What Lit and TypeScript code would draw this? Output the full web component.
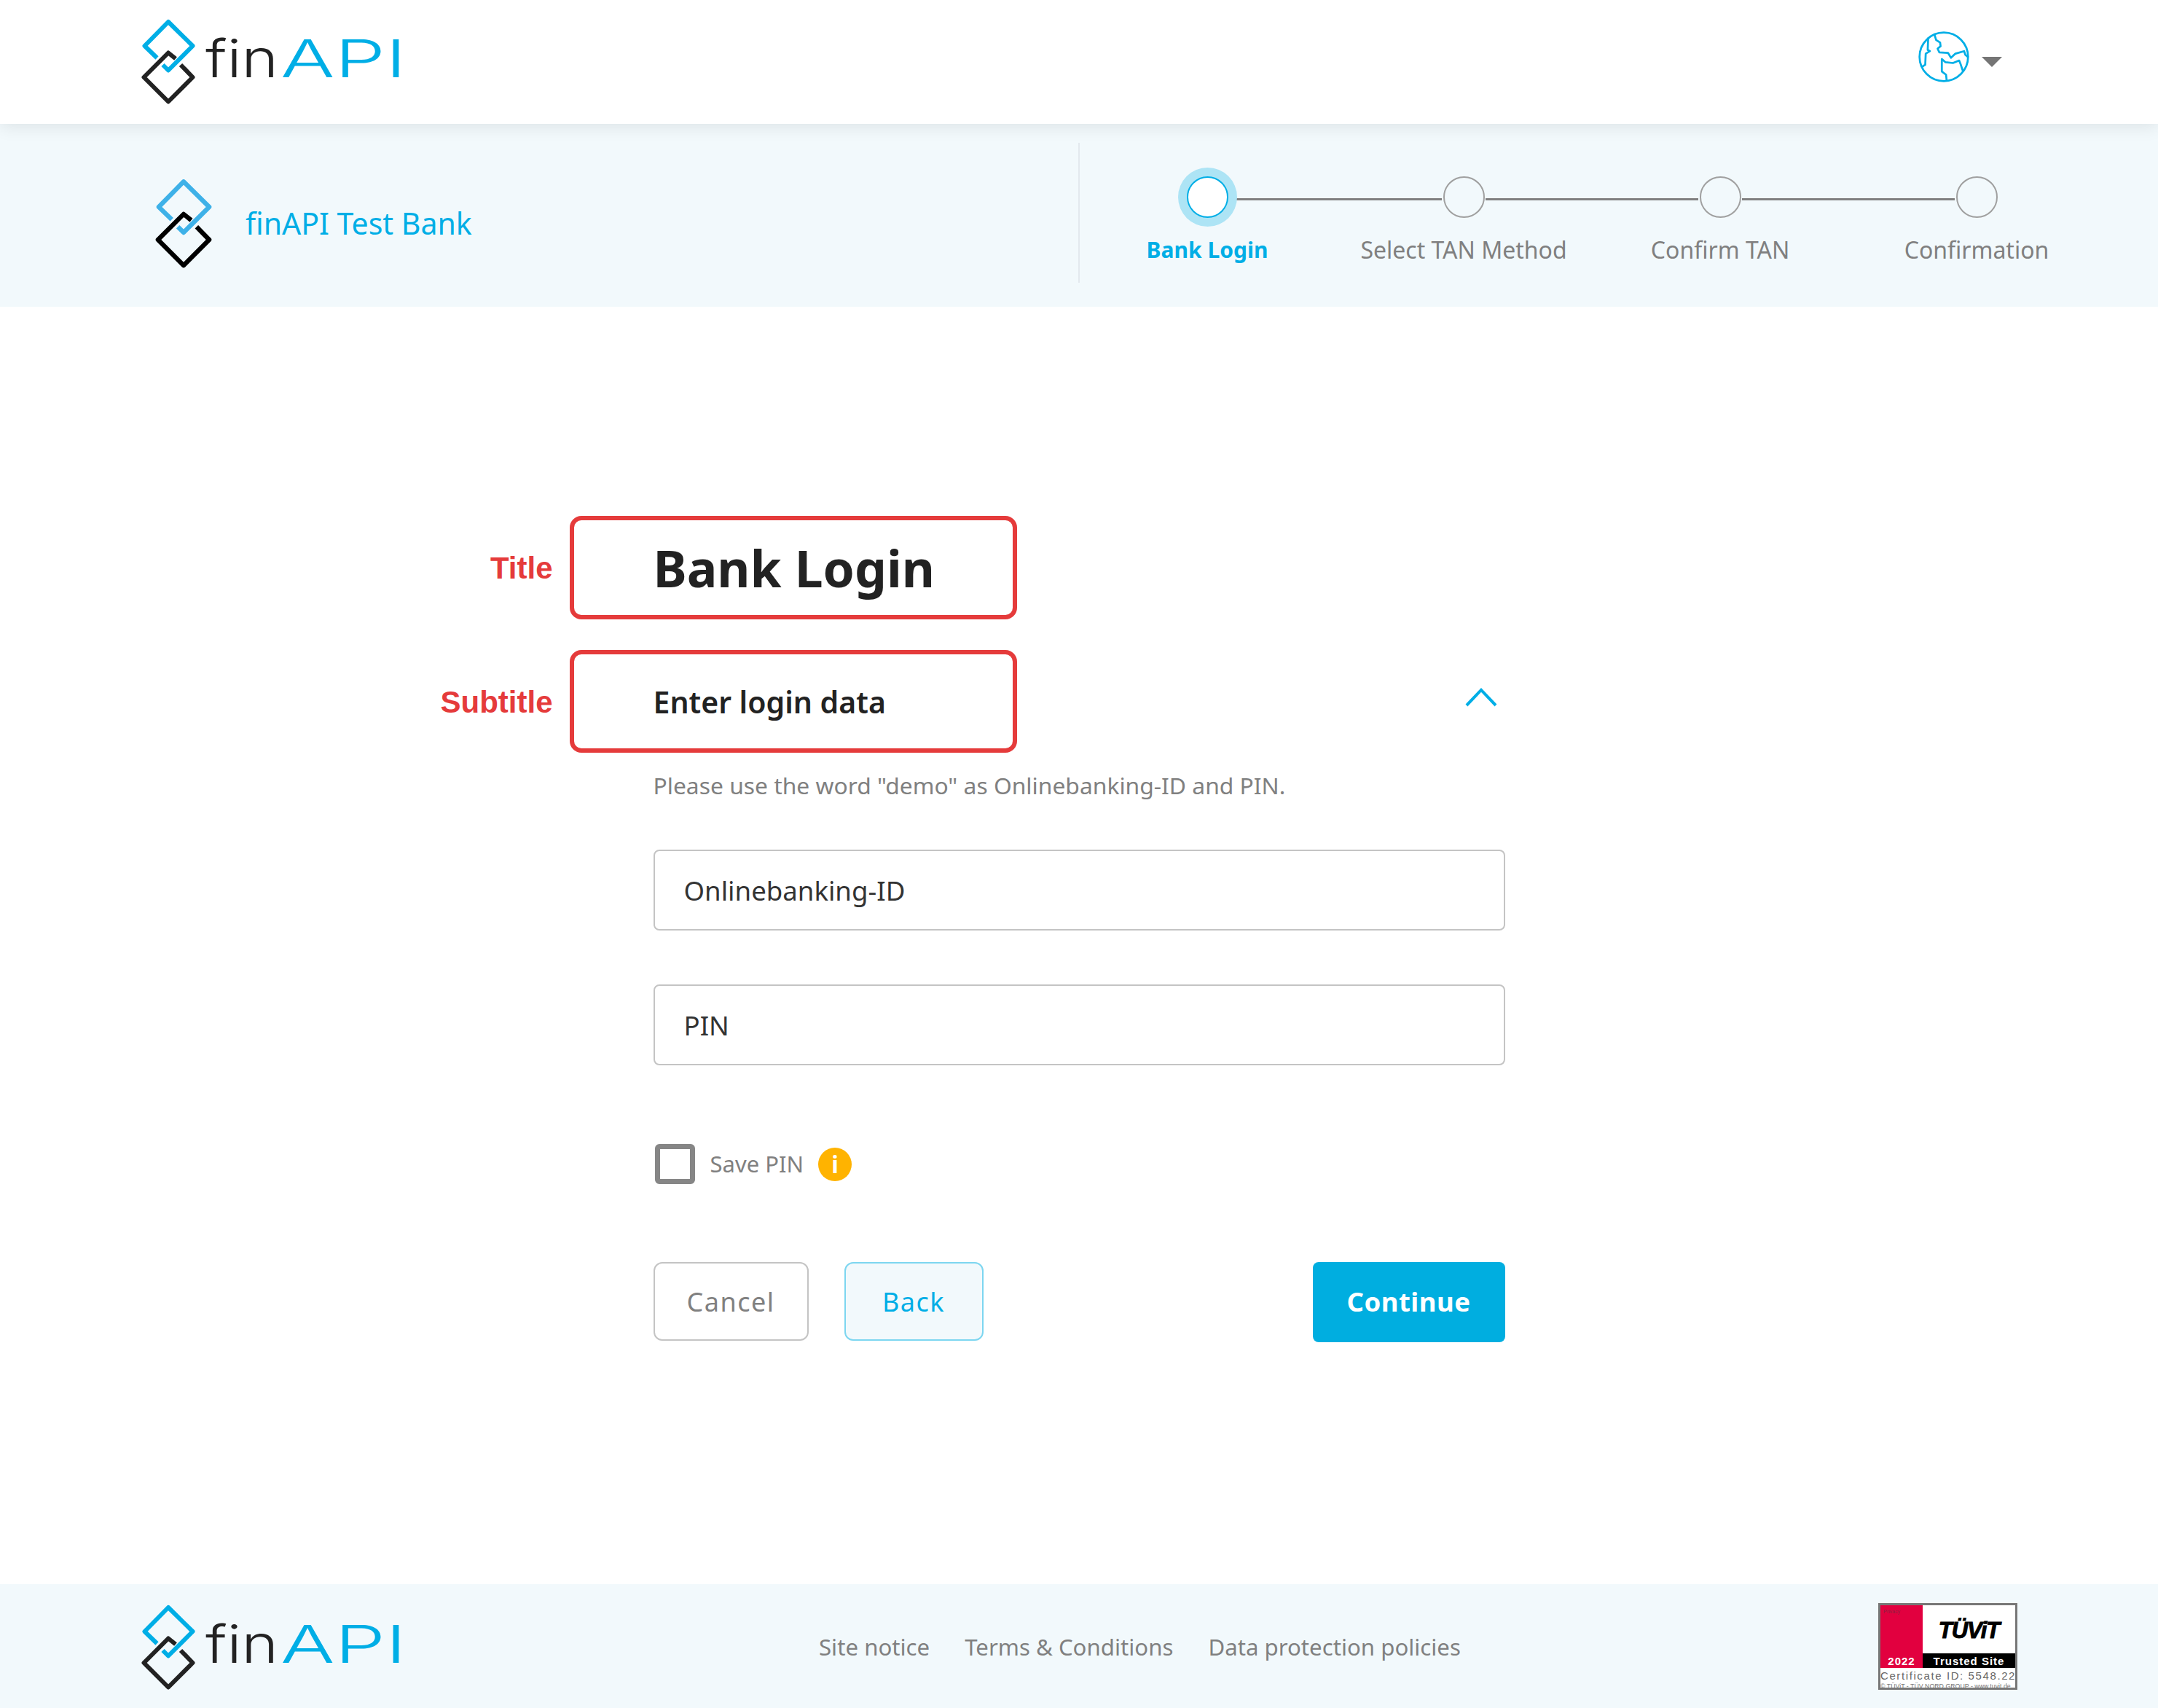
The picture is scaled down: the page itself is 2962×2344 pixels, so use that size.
import { LitElement, html, css, svg } from "lit";
import { customElement } from "lit/decorators.js";

const mark = (blue: string, black: string) => svg`
  <path d="M45.5 79.5L28.5 63L61 30L94.5 63L61 96.5L53.5 89" fill="none" stroke=${blue} stroke-width="6" stroke-linejoin="round"/>
  <path d="M78 89L94.5 106L61 139.5L27.5 106L61 72.5L71 80.5" fill="none" stroke=${black} stroke-width="6" stroke-linejoin="round"/>`;

const brand = html`<svg class="brand" viewBox="21 24 370 122" width="370" height="122" role="img" aria-label="finAPI">
  ${mark("#00aee6", "#222")}
  <text x="112" y="106" class="wm" fill="#222" textLength="100" lengthAdjust="spacingAndGlyphs">fin</text>
  <text x="215" y="106" class="wm" fill="#00aee6" textLength="173" lengthAdjust="spacingAndGlyphs">API</text>
</svg>`;

@customElement("app-root")
export class AppRoot extends LitElement {
  static styles = css`
    :host { display: block; font-family: "Noto Sans", sans-serif; color: #222; }
    * { box-sizing: border-box; }
    .page { min-height: 2344px; display: flex; flex-direction: column; background: #fff; }
    .wm { font-family: Inter, sans-serif; font-weight: 350; font-size: 72px; }
    .brand { display: block; }
    .top { height: 170px; padding: 24px 0 0 191px; display: flex; justify-content: space-between; align-items: flex-start; position: relative; z-index: 2; background: #fff; box-shadow: 0 4px 22px rgba(0,0,0,.09); }
    .lang { display: flex; align-items: center; gap: 17px; margin: 19px 214px 0 0; }
    .caret { width: 0; height: 0; border-left: 14px solid transparent; border-right: 14px solid transparent; border-top: 14px solid #757575; margin-top: 14px; }
    .bank { height: 251px; background: #f2f9fc; display: flex; }
    .bank-left { width: 1480px; padding: 73px 0 0 210px; display: flex; align-items: flex-start; gap: 43px; }
    .bank-name { font-size: 41px; color: #00aee6; line-height: 60px; margin-top: 33px; }
    .divider { width: 2px; height: 192px; margin-top: 26px; background: #e3e9ee; }
    .steps { display: flex; padding-top: 72px; margin-left: -1px; }
    .step { width: 352px; display: flex; flex-direction: column; align-items: center; position: relative; font-size: 32px; color: #808080; }
    .dot { width: 57px; height: 57px; border-radius: 50%; border: 2px solid #a0a0a0; background: #f2f9fc; position: relative; }
    .step.active { color: #00aee6; font-weight: 700; font-size: 30px; }
    .step.active .dot { border-color: #00aee6; background: #fff; box-shadow: 0 0 0 12px #ade4f5; }
    .line { position: absolute; top: 30px; left: calc(50% + 30px); width: 292px; height: 3px; background: #808080; }
    .step-label { margin-top: 22px; line-height: 44px; white-space: nowrap; }
    main { flex: 1; display: flex; justify-content: center; padding-top: 287px; }
    .form { width: 1169px; display: flex; flex-direction: column; }
    .title-row, .sub-row { position: relative; display: flex; align-items: center; justify-content: space-between; }
    .title-row { height: 142px; }
    .sub-row { height: 141px; margin-top: 42px; padding-right: 11px; }
    h1 { margin: 0; font-size: 69.5px; font-weight: 700; color: #222; }
    h2 { margin: 0; font-size: 41px; font-weight: 600; color: #222; }
    .note { position: absolute; left: -115px; top: 0; width: 614px; height: 100%; border: 6px solid #e53b3b; border-radius: 16px; }
    .note span { position: absolute; right: calc(100% + 29px); top: 50%; transform: translateY(-50%); margin-top: 1px; font: 700 42px "Liberation Sans", sans-serif; color: #e53b3b; white-space: nowrap; }
    .chev { margin-bottom: 13px; display: block; }
    .desc { margin: 23px 0 0; font-size: 31.8px; line-height: 44px; color: #808080; }
    .field { height: 111px; border: 2px solid #c4c4c4; border-radius: 8px; padding: 0 40px; display: flex; align-items: center; font-size: 36.6px; color: #333; margin-top: 66px; }
    .field + .field { margin-top: 74px; }
    .save { margin-top: 108px; display: flex; align-items: center; height: 55px; padding-left: 2px; font-size: 31px; color: #808080; }
    .save-label { margin-top: -2px; }
    .check { width: 55px; height: 55px; border: 7px solid #868686; border-radius: 6px; margin-right: 21px; }
    .info { width: 46px; height: 46px; border-radius: 50%; background: #ffb300; color: #fff; margin-left: 20px; display: flex; align-items: center; justify-content: center; font: 700 32px "Noto Sans", sans-serif; }
    .actions { margin-top: 107px; display: flex; align-items: flex-start; }
    .btn { height: 108px; border-radius: 12px; display: flex; align-items: center; justify-content: center; font-size: 36px; letter-spacing: 1.5px; border: 2px solid #c4c4c4; color: #808080; background: #fff; }
    .cancel { width: 213px; }
    .back { width: 191px; margin-left: 49px; border-color: #7dd6f0; background: #f2f9fc; color: #00aee6; }
    .continue { width: 264px; height: 110px; margin-left: auto; border: 0; border-radius: 8px; background: #00aee0; color: #fff; font-weight: 700; font-size: 36.5px; letter-spacing: .5px; padding-bottom: 2px; }
    footer { height: 170px; background: #f2f9fc; display: flex; padding: 26px 0 0 191px; align-items: flex-start; position: relative; }
    .links { display: flex; gap: 48px; font-size: 31.2px; color: #808080; margin: 38px 0 0 563px; line-height: 44px; }
    .badge { position: absolute; left: 2578px; top: 26px; width: 191px; height: 119px; border: 3px solid #777; background: #fff; display: grid; grid-template-columns: 58px 1fr; grid-template-rows: 66px 20px 21px 1fr; font-family: "Liberation Sans", sans-serif; overflow: hidden; }
    .b-red { grid-row: 1 / 3; background: #e2003f; color: #fff; font-weight: 700; font-size: 15px; letter-spacing: 1px; display: flex; flex-direction: column; justify-content: space-between; align-items: center; padding: 1px 0 1px; }
    .b-red small { font-size: 7px; font-weight: 400; letter-spacing: 0; color: #8a2540; align-self: flex-start; margin: 4px 0 0 4px; }
    .b-tuv { display: flex; align-items: center; justify-content: center; font: italic 700 31px "Liberation Sans", sans-serif; color: #000; letter-spacing: -1px; padding-top: 3px; -webkit-text-stroke: 1px #000; }
    .b-bar { background: #000; color: #fff; font-size: 15px; font-weight: 700; display: flex; align-items: center; justify-content: center; letter-spacing: 1px; white-space: nowrap; }
    .b-cert { grid-column: 1 / 3; font-size: 15px; letter-spacing: 1.6px; color: #666; line-height: 22px; white-space: nowrap; }
    .b-small { grid-column: 1 / 3; font-size: 8.8px; color: #777; line-height: 8px; white-space: nowrap; }
  `;

  render() {
    const steps = ["Bank Login", "Select TAN Method", "Confirm TAN", "Confirmation"];
    return html`<div class="page">
      <header class="top">
        ${brand}
        <div class="lang">
          <svg width="70" height="70" viewBox="100 100 206 206" fill="none" stroke="#00aee6" stroke-width="8" stroke-linejoin="round">
            <circle cx="203" cy="203" r="98"/>
            <path d="M165 112L172 135L188 145L190 160L178 170L185 185L220 187L232 207L250 190L285 180L290 195L302 205"/>
            <path d="M140 125L138 175L147 180L130 190L128 235L112 245"/>
            <path d="M280 260L270 230L265 218L240 228L210 225L195 212L195 262L212 275L215 302"/>
          </svg>
          <span class="caret"></span>
        </div>
      </header>
      <section class="bank">
        <div class="bank-left">
          <svg viewBox="21 24 80 122" width="84" height="128">${mark("#3eb1e8", "#000")}</svg>
          <div class="bank-name">finAPI Test Bank</div>
        </div>
        <div class="divider"></div>
        <div class="steps">
          ${steps.map((s, i) => html`<div class="step ${i === 0 ? "active" : ""}">
            ${i < 3 ? html`<span class="line"></span>` : ""}
            <span class="dot"></span>
            <span class="step-label">${s}</span>
          </div>`)}
        </div>
      </section>
      <main>
        <div class="form">
          <div class="title-row"><h1>Bank Login</h1><div class="note"><span>Title</span></div></div>
          <div class="sub-row">
            <h2>Enter login data</h2>
            <div class="note"><span>Subtitle</span></div>
            <svg class="chev" width="44" height="27" viewBox="0 0 44 27" fill="none" stroke="#00aee6" stroke-width="4"><path d="M2 25L22 4L42 25"/></svg>
          </div>
          <p class="desc">Please use the word "demo" as Onlinebanking-ID and PIN.</p>
          <div class="field">Onlinebanking-ID</div>
          <div class="field">PIN</div>
          <div class="save"><span class="check"></span><span class="save-label">Save PIN</span><span class="info">i</span></div>
          <div class="actions">
            <div class="btn cancel">Cancel</div>
            <div class="btn back">Back</div>
            <div class="btn continue">Continue</div>
          </div>
        </div>
      </main>
      <footer>
        ${brand}
        <nav class="links"><span>Site notice</span><span>Terms &amp; Conditions</span><span>Data protection policies</span></nav>
        <div class="badge">
          <div class="b-red"><small>Privacy</small><span>2022</span></div>
          <div class="b-tuv">TÜViT</div>
          <div class="b-bar">Trusted Site</div>
          <div class="b-cert">Certificate ID: 5548.22</div>
          <div class="b-small">© TÜViT - TÜV NORD GROUP - www.tuvit.de</div>
        </div>
      </footer>
    </div>`;
  }
}
